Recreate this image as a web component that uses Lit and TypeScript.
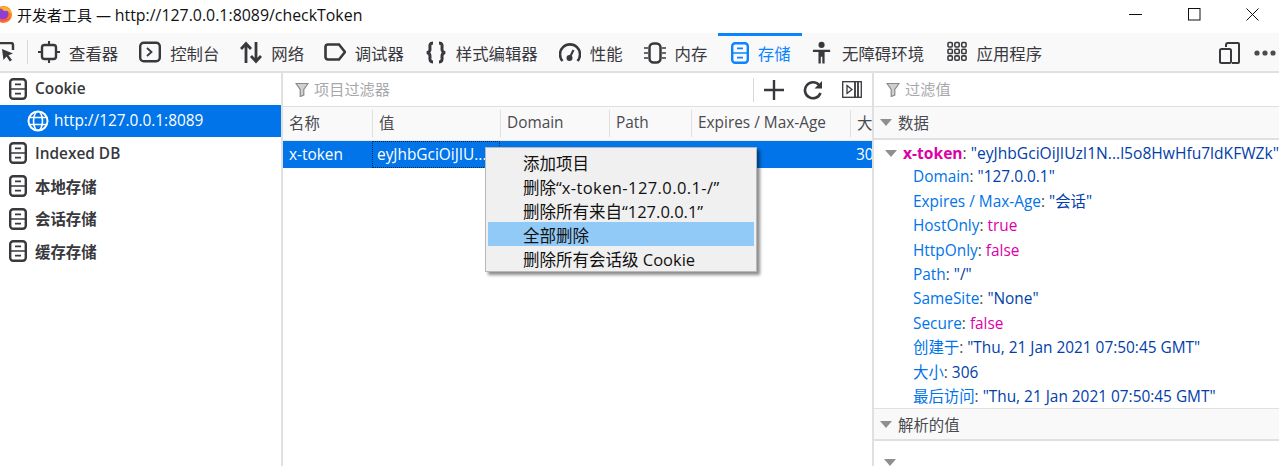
import { LitElement, html, css, svg } from "lit";
import { customElement } from "lit/decorators.js";

const storeIcon = () => html`<svg width="18" height="22" viewBox="0 0 18 22" fill="none" stroke="currentColor" stroke-width="2.4"><rect x="1.2" y="1.2" width="15.6" height="19.6" rx="3"/><path d="M1.5 11h15M6 6.3h6M6 15.7h6" stroke-width="1.7"/></svg>`;

const icons: Record<string, unknown> = {
  inspector: svg`<rect x="4" y="4" width="14" height="14" rx="2.5" stroke-width="2.4"/><path d="M11 0v4M11 18v4M0 11h4M18 11h4"/>`,
  console: svg`<rect x="1.2" y="1.7" width="19.6" height="18.6" rx="3.5" stroke-width="2.4"/><path d="M8 7l4.5 4L8 15" stroke-width="1.8"/>`,
  network: svg`<path d="M6 22V3M1 8l5-5.5L11 8M16 1v19M11 15l5 5.5L21 15" stroke-width="2.8"/>`,
  debugger: svg`<path d="M4 3.5h11L21 11l-6 7.5H4A2.5 2.5 0 0 1 1.5 16V6A2.5 2.5 0 0 1 4 3.5z" stroke-width="2.6"/>`,
  braces: svg`<path d="M8 2C4 2 5 5 5 8s-1 3-3 3.5C4 12 5 13 5 15s-1 6 3 6M14 2c4 0 3 3 3 6s1 3 3 3.5c-2 .5-3 1.5-3 3.5s1 6-3 6" stroke-width="3"/>`,
  perf: svg`<path d="M3.5 20A10 10 0 1 1 18.5 20" stroke-width="2.6"/><circle cx="10.5" cy="17" r="3" fill="currentColor" stroke="none"/><path d="M10.5 17l4-8"/>`,
  memory: svg`<rect x="5.5" y="2.5" width="11" height="19" rx="4" stroke-width="2.5"/><path d="M0 7h4M0 12h4M0 17h4M18 7h4M18 12h4M18 17h4" stroke-width="1.3"/>`,
  a11y: svg`<circle cx="10" cy="3.5" r="3.2" fill="currentColor" stroke="none"/><path d="M1 8.5h18v2.4h-5.8V23h-2.4v-7H9.2v7H6.8V10.9H1z" fill="currentColor" stroke="none"/>`,
  apps: svg`<g stroke-width="1.6"><rect x="1" y="1" width="4.6" height="4.6" rx="1.2"/><rect x="8.2" y="1" width="4.6" height="4.6" rx="1.2"/><rect x="15.4" y="1" width="4.6" height="4.6" rx="1.2"/><rect x="1" y="8" width="4.6" height="4.6" rx="1.2"/><rect x="8.2" y="8" width="4.6" height="4.6" rx="1.2"/><rect x="15.4" y="8" width="4.6" height="4.6" rx="1.2"/><rect x="1" y="15" width="4.6" height="4.6" rx="1.2"/><rect x="8.2" y="15" width="4.6" height="4.6" rx="1.2"/><rect x="15.4" y="15" width="4.6" height="4.6" rx="1.2"/></g>`,
};

const tabs = [
  { k: "inspector", t: "查看器", w: 22, c: "first" },
  { k: "console", t: "控制台", w: 22, c: "" },
  { k: "network", t: "网络", w: 22, c: "tight" },
  { k: "debugger", t: "调试器", w: 22, c: "" },
  { k: "braces", t: "样式编辑器", w: 22, c: "" },
  { k: "perf", t: "性能", w: 22, c: "" },
  { k: "memory", t: "内存", w: 22, c: "" },
  { k: "storage", t: "存储", w: 18, c: "on" },
  { k: "a11y", t: "无障碍环境", w: 21, c: "wide" },
  { k: "apps", t: "应用程序", w: 21, c: "" },
];

const funnel = html`<svg class="funnel" width="14" height="15" viewBox="0 0 14 15"><path d="M1 1.5h12L8.8 7.5V13l-3.6 1.5v-7z" fill="#d0d0d2" stroke="#8a8a8e" stroke-width="1.2"/></svg>`;
const tri = html`<svg width="12" height="7" viewBox="0 0 12 7"><path d="M0 0h12L6 7z" fill="#8f8f93"/></svg>`;

@customElement("app-root")
export class AppRoot extends LitElement {
  static styles = css`
    :host { display: block; width: 1279px; height: 466px; overflow: hidden; background: #fff; color: #38383d; font-family: "Open Sans", "Noto Sans CJK SC", sans-serif; font-size: 15.4px; position: relative; }
    .titlebar { height: 33px; box-sizing: border-box; padding-bottom: 4px; display: flex; align-items: center; background: #fff; color: #111; }
    .logo { margin-left: -5px; flex: none; }
    .title { margin-left: 5px; font-size: 15px; }
    .title span { font-size: 15.9px; }
    .spacer { flex: 1; }
    .win { width: 58.5px; height: 29px; flex: none; display: flex; align-items: center; justify-content: center; }
    .win:last-child { margin-right: -3px; }
    .toolbar { height: 38px; display: flex; align-items: stretch; background: #f9f9fa; border-bottom: 2px solid #e0e0e2; color: #38383d; }
    .picker { margin-left: -7px; width: 34px; display: flex; align-items: center; }
    .sep { width: 1px; height: 24px; background: #d7d7db; align-self: center; flex: none; }
    .tab { display: flex; align-items: center; gap: 9px; padding: 0 10.5px 2px; font-size: 16.4px; border-top: 3px solid transparent; height: 33px; }
    .tab.first { padding-left: 10px; }
    .tab.tight { padding-right: 9px; }
    .tab.wide { padding-right: 12px; }
    .tab.on { color: #0a84ff; border-top-color: #0a84ff; padding: 0 11px 2px 13px; }
    .tab svg { flex: none; }
    .tail { display: flex; align-items: center; gap: 14px; padding: 1px 3px 0 0; }
    .main { display: flex; height: 393px; }
    .side { width: 281px; flex: none; border-right: 2px solid #e0e0e2; }
    .node { height: 32.6px; display: flex; align-items: center; gap: 8px; padding-left: 9px; font-weight: 600; color: #38383d; }
    .node:first-child { height: 31.6px; }
    .node.sel { background: #0074e8; color: #fff; font-weight: 400; padding-left: 27px; gap: 5px; }
    .mid { width: 589px; flex: none; display: flex; flex-direction: column; position: relative; }
    .filter { height: 33px; flex: none; display: flex; align-items: center; padding-left: 12px; gap: 5px; border-bottom: 1px solid #e0e0e2; color: #a8a8ac; font-size: 15.2px; background: #fff; }
    .filter > span { padding-bottom: 3px; }
    .actions { margin-left: auto; display: flex; align-items: center; color: #38383d; height: 100%; }
    .actions .sep { margin-right: 10px; }
    .actions svg { margin-right: 19px; }
    .actions svg.last { margin-right: 10px; }
    .thead, .trow { display: grid; grid-template-columns: 89px 128px 109px 82px 159px 22px; }
    .thead { height: 33px; background: #f9f9fa; color: #4a4a4f; border-bottom: 1px solid #e8e8ea; }
    .th { display: flex; align-items: center; padding: 0 0 2px 6px; white-space: nowrap; overflow: hidden; }
    .th + .th { border-left: 1px solid #e0e0e2; margin: 3px 0; }
    .trow { height: 27px; background: #0074e8; color: #fff; }
    .td { display: flex; align-items: center; padding-left: 6px; white-space: nowrap; overflow: hidden; }
    .td.focus { outline: 1px dotted #00295a; outline-offset: -1px; padding-left: 5px; }
    .menu { position: absolute; left: 202px; top: 74px; width: 272px; height: 125px; box-sizing: border-box; background: #f0f0f0; border: 1px solid #b8b8b8; padding: 2px; box-shadow: 3px 3px 3px rgba(0,0,0,.45); color: #111; font-size: 16.5px; }
    .mi { height: 24px; line-height: 27px; padding-left: 35px; white-space: nowrap; }
    .mi.hot { background: #91c9f7; }
    .mi span { letter-spacing: 0.4px; }
    .right { flex: 1; min-width: 0; border-left: 2px solid #e0e0e2; display: flex; flex-direction: column; }
    .sechead { height: 33px; flex: none; display: flex; align-items: center; gap: 6px; padding: 0 0 1px 6px; background: #f9f9fa; border-bottom: 2px solid #e0e0e2; color: #4a4a4f; box-sizing: border-box; }
    .sechead.next { border-top: 1px solid #e0e0e2; padding-bottom: 0; }
    .tree { height: 268px; flex: none; overflow: hidden; padding-top: 1px; box-sizing: border-box; white-space: nowrap; }
    .line { height: 24.4px; line-height: 24.4px; padding-left: 39px; color: #4a4a4f; }
    .line.top { padding-left: 11px; display: flex; align-items: center; gap: 6px; font-size: 15.6px; }
    .k { color: #0074e8; }
    .ks { color: #dd00a9; font-weight: 700; }
    .s { color: #003eaa; }
    .b { color: #dd00a9; }
    .end { padding: 9px 0 0 10px; }
  `;

  private tabIcon(t: { k: string; w: number }) {
    if (t.k === "storage") return storeIcon();
    return html`<svg width=${t.w} height="24" viewBox="0 0 22 24" fill="none" stroke="currentColor" stroke-width="2.1">${icons[t.k]}</svg>`;
  }

  private row(k: string, v: unknown, cls = "s") {
    return html`<div class="line"><span class="k">${k}</span>: <span class=${cls}>${v}</span></div>`;
  }

  render() {
    return html`
      <div class="titlebar">
        <svg class="logo" width="17" height="17" viewBox="0 0 17 17"><circle cx="8.5" cy="8.5" r="8.5" fill="#ff7a1a"/><circle cx="8" cy="8" r="5.5" fill="#8c3fd1"/><path d="M5 1c5-2 11 1 12 8-2-3-5-5-8-4z" fill="#ffb02e"/><path d="M1 11c2 5 10 6 14 1-4 2-9 2-14-1z" fill="#ff4f5e"/></svg>
        <span class="title">开发者工具 — <span>http://127.0.0.1:8089/checkToken</span></span>
        <span class="spacer"></span>
        <span class="win"><svg width="13" height="13" viewBox="0 0 13 13"><path d="M0 6.5h13" stroke="#111"/></svg></span>
        <span class="win"><svg width="13" height="13" viewBox="0 0 13 13"><rect x=".5" y=".5" width="11.5" height="11.5" fill="none" stroke="#111"/></svg></span>
        <span class="win"><svg width="13" height="13" viewBox="0 0 13 13"><path d="M.5.5l12 12M12.5.5l-12 12" stroke="#111"/></svg></span>
      </div>
      <div class="toolbar">
        <div class="picker"><svg width="22" height="20" viewBox="0 0 22 20" fill="none" stroke="#38383d" stroke-width="2.4"><path d="M1 13V3a2 2 0 0 1 2-2h15a2 2 0 0 1 2 2v5M1 15h6"/><path d="M9 7l11 4.5-4.500 1.800 3.500 4.700-2.200 1.500-3.300-5-3 3.500z" fill="#38383d" stroke="none"/></svg></div>
        <div class="sep"></div>
        ${tabs.map((t) => html`<div class="tab ${t.c}">${this.tabIcon(t)}<span>${t.t}</span></div>`)}
        <span class="spacer"></span>
        <div class="tail">
          <svg width="21" height="22" viewBox="0 0 21 22" fill="none" stroke="#38383d" stroke-width="2"><path d="M7 5V3a2 2 0 0 1 2-2h10a1 1 0 0 1 1 1v18a1 1 0 0 1-1 1h-6"/><rect x="1" y="7" width="11" height="14" rx="1.5"/></svg>
          <svg width="22" height="6" viewBox="0 0 22 6" fill="#4a4a4f"><circle cx="3" cy="3" r="2.6"/><circle cx="11" cy="3" r="2.6"/><circle cx="19" cy="3" r="2.6"/></svg>
        </div>
      </div>
      <div class="main">
        <div class="side">
          <div class="node">${storeIcon()}Cookie</div>
          <div class="node sel"><svg width="22" height="22" viewBox="0 0 22 22" fill="none" stroke="#fff" stroke-width="1.6"><circle cx="11" cy="11" r="9.5" stroke-width="2"/><ellipse cx="11" cy="11" rx="4.5" ry="9.5"/><path d="M2 7.5h18M2 14.5h18"/></svg>http://127.0.0.1:8089</div>
          <div class="node">${storeIcon()}Indexed DB</div>
          <div class="node">${storeIcon()}本地存储</div>
          <div class="node">${storeIcon()}会话存储</div>
          <div class="node">${storeIcon()}缓存存储</div>
        </div>
        <div class="mid">
          <div class="filter">${funnel}<span>项目过滤器</span>
            <div class="actions">
              <div class="sep"></div>
              <svg width="20" height="20" viewBox="0 0 20 20" fill="none" stroke="#38383d" stroke-width="2.4"><path d="M10 0v20M0 10h20"/></svg>
              <svg width="20" height="20" viewBox="0 0 20 20" fill="none" stroke="#38383d" stroke-width="2.6"><path d="M17.5 13a8 8 0 1 1-1.5-8"/><path d="M19 1v7.5h-7.5" fill="#38383d" stroke="none"/></svg>
              <svg class="last" width="20" height="17" viewBox="0 0 20 17" fill="none" stroke="#38383d" stroke-width="1.3"><rect x=".7" y=".7" width="18.6" height="15.6"/><path d="M5 4.5l5 4-5 4z"/><path d="M13 1v15M16 1v15" stroke-width="1.8"/></svg>
            </div>
          </div>
          <div class="thead">
            <div class="th">名称</div><div class="th">值</div><div class="th">Domain</div><div class="th">Path</div><div class="th">Expires / Max-Age</div><div class="th">大小</div>
          </div>
          <div class="trow">
            <div class="td">x-token</div><div class="td focus">eyJhbGciOiJIU...</div><div class="td"></div><div class="td"></div><div class="td"></div><div class="td">306</div>
          </div>
          <div class="menu">
            <div class="mi">添加项目</div>
            <div class="mi">删除“<span>x-token-127.0.0.1-/</span>”</div>
            <div class="mi">删除所有来自“127.0.0.1”</div>
            <div class="mi hot">全部删除</div>
            <div class="mi">删除所有会话级 Cookie</div>
          </div>
        </div>
        <div class="right">
          <div class="filter">${funnel}<span>过滤值</span></div>
          <div class="sechead">${tri}<span>数据</span></div>
          <div class="tree">
            <div class="line top">${tri}<span><span class="ks">x-token</span>: <span class="s">"eyJhbGciOiJIUzI1N...l5o8HwHfu7ldKFWZk"</span></span></div>
            ${this.row("Domain", '"127.0.0.1"')}
            ${this.row("Expires / Max-Age", '"会话"')}
            ${this.row("HostOnly", "true", "b")}
            ${this.row("HttpOnly", "false", "b")}
            ${this.row("Path", '"/"')}
            ${this.row("SameSite", '"None"')}
            ${this.row("Secure", "false", "b")}
            ${this.row("创建于", '"Thu, 21 Jan 2021 07:50:45 GMT"')}
            ${this.row("大小", "306")}
            ${this.row("最后访问", '"Thu, 21 Jan 2021 07:50:45 GMT"')}
          </div>
          <div class="sechead next">${tri}<span>解析的值</span></div>
          <div class="end">${tri}</div>
        </div>
      </div>
    `;
  }
}
